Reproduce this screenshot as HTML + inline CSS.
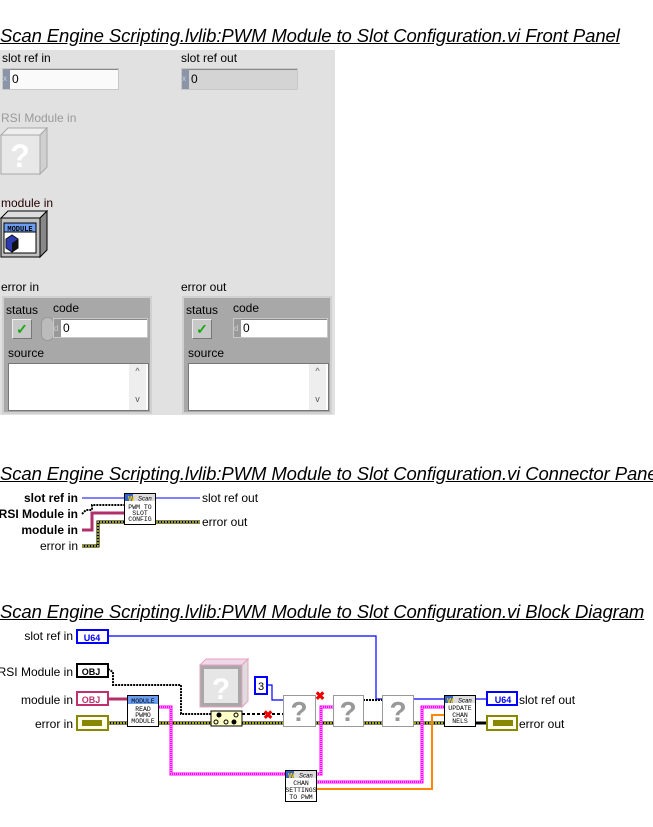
<!DOCTYPE html>
<html><head><meta charset="utf-8"><style>
body{margin:0;width:653px;height:827px;background:#fff;position:relative;overflow:hidden;font-family:"Liberation Sans",sans-serif}
.t{position:absolute;left:0;font-style:italic;font-size:18.5px;text-decoration:underline;white-space:nowrap;color:#000;letter-spacing:-0.1px}
.a{position:absolute;white-space:nowrap}
.l{position:absolute;font-size:12px;color:#000;white-space:nowrap}
.num{position:absolute;height:20px;background:#fff;border:1px solid #c8c8c8;box-shadow:inset 1px 1px 0 #888;font-size:12px}
.num .r{position:absolute;left:0;top:0;width:7px;height:20px;background:#8a95a8;color:#c8d0e0;font-size:8px;line-height:20px}
.num .v{position:absolute;left:9px;top:3px}
.cl{position:absolute;width:150px;height:118px;background:#a8a8a8;border:2px solid #d0d0d0;box-sizing:border-box}
</style></head><body>
<div class="t" style="top:25px">Scan Engine Scripting.lvlib:PWM Module to Slot Configuration.vi Front Panel</div>
<div class="a" style="left:0;top:50px;width:335px;height:365px;background:#e1e1e1"></div>
<div class="l" style="left:2px;top:51px">slot ref in</div>
<div class="l" style="left:181px;top:51px">slot ref out</div>
<div class="num" style="left:2px;top:68px;width:115px;background:#fafafa"><div class="r">x</div><div class="v">0</div></div>
<div class="num" style="left:181px;top:68px;width:115px;background:#d4d4d4"><div class="r">x</div><div class="v">0</div></div>
<div class="l" style="left:1px;top:111px;color:#9a9a9a">RSI Module in</div>
<svg class="a" style="left:0;top:127px" width="50" height="50"><polygon points="1,8 8,1 47,1 40,8" fill="#eee" stroke="#a8a8a8"/><polygon points="40,8 47,1 47,40 40,47" fill="#d0d0d0" stroke="#a8a8a8"/><rect x="1" y="8" width="39" height="39" fill="#e8e8e8" stroke="#a8a8a8"/><text x="20" y="40" font-size="32" font-weight="bold" fill="#fff" text-anchor="middle" font-family="Liberation Sans">?</text></svg>
<div class="l" style="left:1px;top:196px;color:#200">module in</div>
<svg class="a" style="left:0;top:210px" width="50" height="50"><polygon points="1,8 8,1 47,1 40,8" fill="#ddd" stroke="#000"/><polygon points="40,8 47,1 47,40 40,47" fill="#888" stroke="#000"/><rect x="1" y="8" width="39" height="39" fill="#c0c0c0" stroke="#000"/><rect x="4" y="13" width="32" height="30" fill="#fff" stroke="#000"/><rect x="4" y="13" width="32" height="9" fill="#6a9cf0" stroke="#000"/><text x="20" y="21" font-size="7" font-weight="bold" text-anchor="middle" font-family="Liberation Mono">MODULE</text><polygon points="6,29 12,25 18,29 18,38 12,42 6,38" fill="#2d3ab0" stroke="#111"/><polygon points="12,33 18,29 18,38 12,42" fill="#111"/></svg>
<div class="l" style="left:1px;top:280px">error in</div>
<div class="l" style="left:181px;top:280px">error out</div>
<div class="cl" style="left:2px;top:296px"></div>
<div class="cl" style="left:182px;top:296px"></div>
<div class="l" style="left:6px;top:303px">status</div><div class="l" style="left:53px;top:301px">code</div>
<div class="a" style="left:12px;top:319px;width:18px;height:18px;background:#c8c8c8;border:1px solid #eee;border-right-color:#777;border-bottom-color:#777;color:#1a1;font-size:14px;line-height:18px;text-align:center;font-weight:bold">✓</div>
<div class="a" style="left:41px;top:317px;width:11px;height:22px;background:#bbb;border-radius:6px;border:1px solid #999"></div>
<div class="num" style="left:53px;top:318px;width:93px;height:18px"><div class="r" style="height:18px;background:#999;color:#ccc">d</div><div class="v" style="top:2px">0</div></div>
<div class="l" style="left:8px;top:346px">source</div>
<div class="a" style="left:8px;top:363px;width:139px;height:46px;background:#fff;border:1px solid #777"></div>
<div class="a" style="left:129px;top:364px;width:17px;height:46px;background:#eee;font-size:9px;color:#555;text-align:center;line-height:14px">^<br><br>v</div>
<div class="l" style="left:186px;top:303px">status</div><div class="l" style="left:233px;top:301px">code</div>
<div class="a" style="left:192px;top:319px;width:18px;height:18px;background:#c8c8c8;border:1px solid #eee;border-right-color:#777;border-bottom-color:#777;color:#1a1;font-size:14px;line-height:18px;text-align:center;font-weight:bold">✓</div>
<div class="num" style="left:233px;top:318px;width:93px;height:18px"><div class="r" style="height:18px;background:#999;color:#ccc">d</div><div class="v" style="top:2px">0</div></div>
<div class="l" style="left:188px;top:346px">source</div>
<div class="a" style="left:188px;top:363px;width:139px;height:46px;background:#fff;border:1px solid #777"></div>
<div class="a" style="left:309px;top:364px;width:17px;height:46px;background:#eee;font-size:9px;color:#555;text-align:center;line-height:14px">^<br><br>v</div>

<div class="t" style="top:463px">Scan Engine Scripting.lvlib:PWM Module to Slot Configuration.vi Connector Pane</div>
<svg class="a" style="left:0;top:485px" width="300" height="70" font-family="Liberation Sans" font-size="12">
<text x="78" y="17" text-anchor="end" font-weight="bold">slot ref in</text>
<text x="78" y="33" text-anchor="end" font-weight="bold">RSI Module in</text>
<text x="78" y="49" text-anchor="end" font-weight="bold">module in</text>
<text x="78" y="65" text-anchor="end">error in</text>
<text x="202" y="17">slot ref out</text>
<text x="202" y="41">error out</text>
<line x1="82" y1="13" x2="124" y2="13" stroke="#00f"/>
<path d="M82,29 L86,25 L92,25 L92,20 L124,20" fill="none" stroke="#000" stroke-width="2" stroke-dasharray="2,1"/>
<path d="M82,45 L92,45 L92,28 L124,28" fill="none" stroke="#b0306a" stroke-width="3"/>
<path d="M82,61 L98,61 L98,37 L124,37" fill="none" stroke="#000" stroke-width="3"/><path d="M82,61 L98,61 L98,37 L124,37" fill="none" stroke="#cc0" stroke-width="1.5" stroke-dasharray="2,1"/>
<line x1="156" y1="13" x2="200" y2="13" stroke="#00f"/>
<line x1="156" y1="37" x2="200" y2="37" stroke="#000" stroke-width="3"/><line x1="156" y1="37" x2="200" y2="37" stroke="#cc0" stroke-width="1.5" stroke-dasharray="2,1"/>
<rect x="124.5" y="8.5" width="31" height="31" fill="#fff" stroke="#000"/>
<rect x="125" y="9" width="30" height="7" fill="#ddd"/><rect x="125" y="9" width="8" height="7" fill="#36c"/><text x="128" y="16" font-size="7" fill="#fc0" font-weight="bold">W</text><text x="138" y="15.5" font-size="6" font-style="italic">Scan</text>
<text x="140" y="24" font-size="6.5" text-anchor="middle" font-family="Liberation Mono">PWM TO</text><text x="140" y="30" font-size="6.5" text-anchor="middle" font-family="Liberation Mono">SLOT</text><text x="140" y="36" font-size="6.5" text-anchor="middle" font-family="Liberation Mono">CONFIG</text>
</svg>

<div class="t" style="top:601px">Scan Engine Scripting.lvlib:PWM Module to Slot Configuration.vi Block Diagram</div>
<svg class="a" style="left:0;top:620px" width="653" height="207" font-family="Liberation Sans" font-size="12">
<g transform="translate(0,-620)">
<text x="73" y="640" text-anchor="end">slot ref in</text>
<text x="73" y="676" text-anchor="end">RSI Module in</text>
<text x="73" y="704" text-anchor="end">module in</text>
<text x="73" y="728" text-anchor="end">error in</text>
<text x="519" y="704">slot ref out</text>
<text x="519" y="728">error out</text>
<path d="M108,636 L376,636 L376,699 L444,699" fill="none" stroke="#00f" stroke-width="1.2"/>
<path d="M268,685 L272,685 L272,700 L283,700" fill="none" stroke="#00f" stroke-width="1.2"/>
<path d="M108,723 L486,723" stroke="#000" stroke-width="3"/><path d="M108,723 L486,723" stroke="#dd0" stroke-width="1.5" stroke-dasharray="2,1"/>
<path d="M108,669 L113,672 L113,685 L181,685 L181,714 L211,714" fill="none" stroke="#000" stroke-width="2" stroke-dasharray="2,1"/>
<path d="M242,714 L283,714" fill="none" stroke="#000" stroke-width="2" stroke-dasharray="3,2"/>
<path d="M363,700 L382,700" fill="none" stroke="#000" stroke-width="2" stroke-dasharray="2,1"/>
<path d="M108,699 L127,699" stroke="#b0306a" stroke-width="3"/>
<path d="M158,707 L171,707 L171,774 L285,774" fill="none" stroke="#f0f" stroke-width="3"/><path d="M158,707 L171,707 L171,774 L285,774" fill="none" stroke="#fff" stroke-width="1" stroke-dasharray="1,1"/>
<path d="M317,774 L321,774 L321,707 L333,707" fill="none" stroke="#f0f" stroke-width="3"/><path d="M317,774 L321,774 L321,707 L333,707" fill="none" stroke="#fff" stroke-width="1" stroke-dasharray="1,1"/>
<path d="M317,782 L422,782 L422,707 L444,707" fill="none" stroke="#f0f" stroke-width="3"/><path d="M317,782 L422,782 L422,707 L444,707" fill="none" stroke="#fff" stroke-width="1" stroke-dasharray="1,1"/>
<path d="M317,789 L432,789 L432,715 L444,715" fill="none" stroke="#f80" stroke-width="2"/>
<path d="M475,699 L486,699" stroke="#00f" stroke-width="1.2"/>
<path d="M475,723 L486,723" stroke="#000" stroke-width="3"/>
<rect x="77" y="630" width="31" height="13" fill="#fff" stroke="#00f" stroke-width="2"/><text x="92" y="641" font-size="9" font-weight="bold" fill="#00f" text-anchor="middle">U64</text>
<rect x="77" y="664" width="31" height="13" fill="#fff" stroke="#000" stroke-width="2"/><text x="91" y="675" font-size="9" font-weight="bold" text-anchor="middle">OBJ</text>
<rect x="77" y="692" width="31" height="13" fill="#fff" stroke="#c03070" stroke-width="2"/><text x="91" y="703" font-size="9" font-weight="bold" fill="#c03070" text-anchor="middle">OBJ</text>
<rect x="77" y="716" width="31" height="14" fill="#ffe" stroke="#880" stroke-width="2"/><rect x="82" y="720" width="20" height="6" fill="#880"/>
<rect x="487" y="692" width="30" height="13" fill="#fff" stroke="#00f" stroke-width="2"/><text x="503" y="703" font-size="9" font-weight="bold" fill="#00f" text-anchor="middle">U64</text>
<rect x="487" y="716" width="30" height="14" fill="#ffe" stroke="#880" stroke-width="2"/><rect x="493" y="720" width="20" height="6" fill="#880"/>
<rect x="127.5" y="695.5" width="31" height="31" fill="#fff" stroke="#000"/><rect x="128" y="696" width="30" height="8" fill="#6a9cf0"/>
<g font-family="Liberation Mono" font-size="6.5" text-anchor="middle"><text x="143" y="703">MODULE</text><text x="143" y="711">READ</text><text x="143" y="717">PWMO</text><text x="143" y="723">MODULE</text></g>
<polygon points="200,665 206,659 248,659 242,665" fill="#f0d8e8" stroke="#e8a0c0"/><polygon points="242,665 248,659 248,701 242,707" fill="#ddd" stroke="#e8a0c0"/>
<rect x="200" y="665" width="42" height="42" fill="#a8a8a8" stroke="#e8a0c0"/><rect x="204" y="669" width="34" height="34" fill="#e6e6e6"/>
<text x="221" y="699" font-size="30" font-weight="bold" fill="#fff" text-anchor="middle">?</text>
<rect x="255" y="677" width="12" height="17" fill="#fff" stroke="#00f" stroke-width="2"/><text x="261" y="690" font-size="11" text-anchor="middle">3</text>
<rect x="211" y="711" width="31" height="15" fill="#ffffc8" stroke="#000"/>
<circle cx="219" cy="715" r="2.5"/><circle cx="234" cy="722" r="2.5"/><circle cx="216" cy="722" r="2" fill="none" stroke="#000"/><circle cx="226" cy="722" r="2" fill="none" stroke="#000"/><circle cx="236" cy="715" r="2" fill="none" stroke="#000"/>
<g font-size="12" font-weight="bold" fill="#e00"><text x="263" y="719">✖</text><text x="315" y="700">✖</text></g>
<g fill="#fff" stroke="#999"><rect x="283.5" y="695.5" width="32" height="31"/><rect x="333.5" y="695.5" width="30" height="31"/><rect x="382.5" y="695.5" width="31" height="31"/></g>
<g font-size="28" font-weight="bold" fill="#999" text-anchor="middle"><text x="299" y="721">?</text><text x="348" y="721">?</text><text x="398" y="721">?</text></g>
<rect x="444.5" y="695.5" width="31" height="31" fill="#fff" stroke="#000"/><rect x="445" y="696" width="30" height="7" fill="#ddd"/><rect x="445" y="696" width="8" height="7" fill="#36c"/><text x="447" y="703" font-size="7" fill="#fc0" font-weight="bold">W</text><text x="458" y="702.5" font-size="6" font-style="italic">Scan</text>
<g font-family="Liberation Mono" font-size="6.5" text-anchor="middle"><text x="460" y="710">UPDATE</text><text x="460" y="717">CHAN</text><text x="460" y="723">NELS</text></g>
<rect x="285.5" y="770.5" width="31" height="31" fill="#fff" stroke="#000"/><rect x="286" y="771" width="30" height="7" fill="#ddd"/><rect x="286" y="771" width="8" height="7" fill="#36c"/><text x="288" y="778" font-size="7" fill="#fc0" font-weight="bold">W</text><text x="299" y="777.5" font-size="6" font-style="italic">Scan</text>
<g font-family="Liberation Mono" font-size="6.5" text-anchor="middle"><text x="301" y="785">CHAN</text><text x="301" y="792">SETTINGS</text><text x="301" y="799">TO PWM</text></g>
</g></svg>
</body></html>
